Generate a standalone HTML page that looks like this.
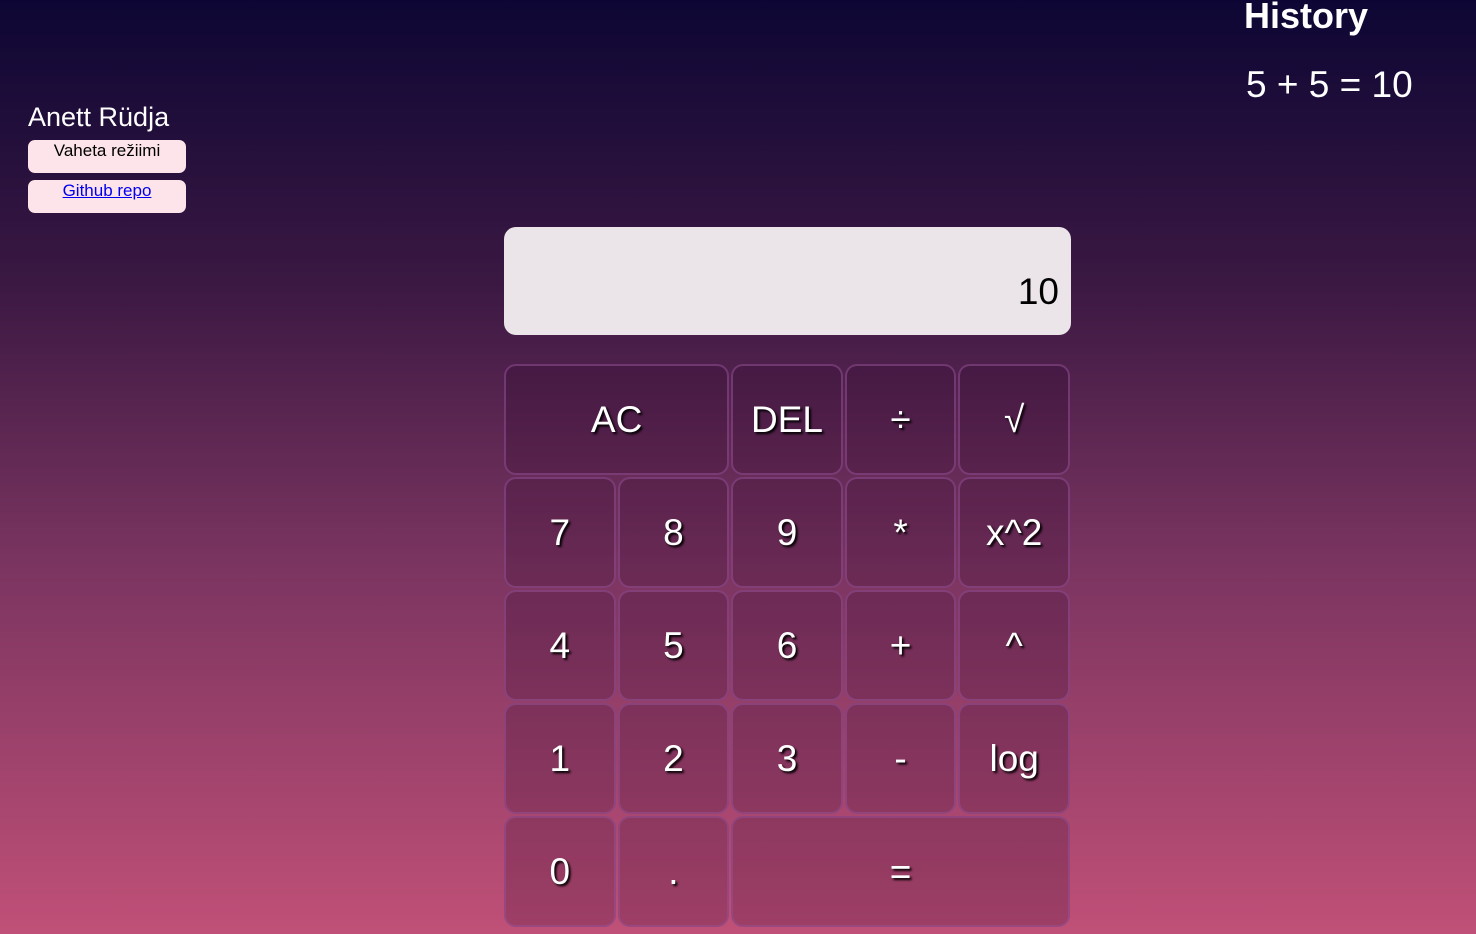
<!DOCTYPE html>
<html><head><style>
html,body{margin:0;width:1476px;height:934px;overflow:hidden}
body{background:linear-gradient(#0d0634 0%,#3a1842 30%,#7a3460 60%,#c05077 100%);font-family:"Liberation Sans",sans-serif;position:relative}
.name{position:absolute;left:28px;top:102px;color:#fff;font-size:27px}
.pb{position:absolute;left:28px;width:158px;height:33px;background:#fde4ea;border-radius:7px;text-align:center;font-size:17px;line-height:22px;color:#000}
.pb a{color:#00e;text-decoration:underline}
.hist{position:absolute;left:1244px;top:-5px;color:#fff;font-size:36px;font-weight:bold}
.hl{position:absolute;left:1246px;top:64px;color:#fff;font-size:37px}
.disp{position:absolute;left:504px;top:227px;width:567px;height:108px;background:#ebe4e9;border-radius:12px;box-sizing:border-box;text-align:right;padding:44px 12px 0 0;font-size:37px;color:#000}
.grid{position:absolute;left:504px;top:364px;display:grid;grid-template-columns:repeat(5,111.6px);grid-auto-rows:111px;gap:2px}
.grid div{border:2px solid rgba(150,80,150,0.55);border-radius:12px;background:rgba(40,5,40,0.22);color:#fff;font-size:37px;display:flex;align-items:center;justify-content:center;text-shadow:2px 2px 2px #000}
.s2{grid-column:span 2}
</style></head><body>
<div class="name">Anett Rüdja</div>
<div class="pb" style="top:140px">Vaheta režiimi</div>
<div class="pb" style="top:180px"><a>Github repo</a></div>
<div class="hist">History</div>
<div class="hl">5 + 5 = 10</div>
<div class="disp">10</div>
<div class="grid">
<div class="s2">AC</div><div>DEL</div><div>÷</div><div>√</div>
<div>7</div><div>8</div><div>9</div><div>*</div><div>x^2</div>
<div>4</div><div>5</div><div>6</div><div>+</div><div>^</div>
<div>1</div><div>2</div><div>3</div><div>-</div><div>log</div>
<div>0</div><div>.</div><div style="grid-column:span 3">=</div>
</div>
</body></html>
